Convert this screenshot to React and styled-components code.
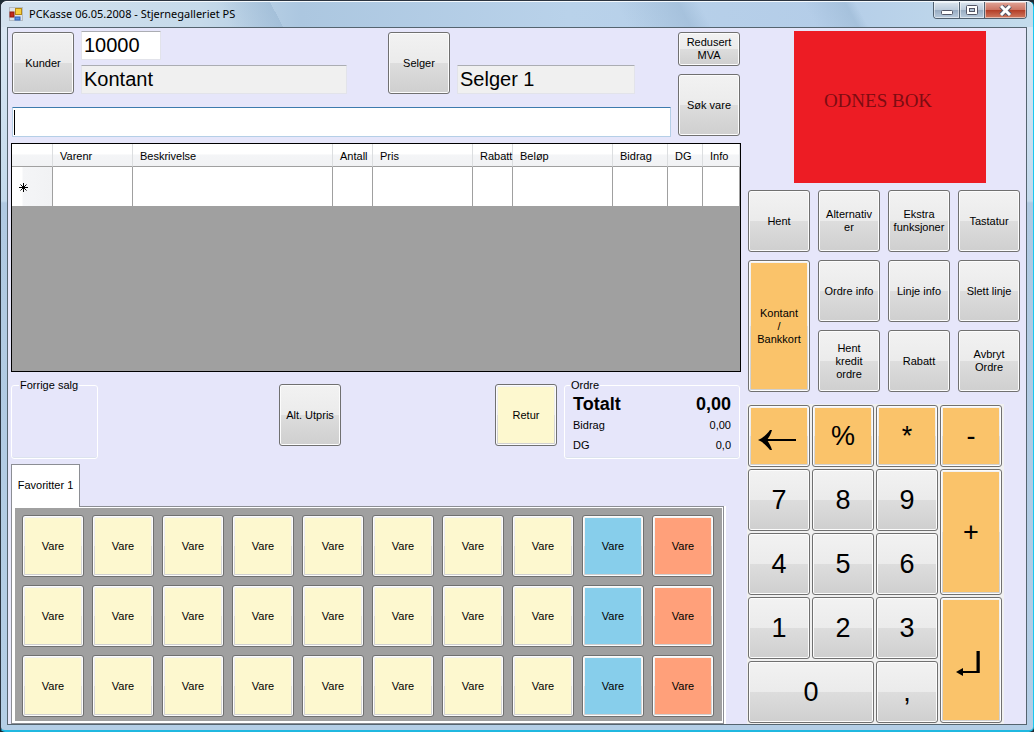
import React from 'react';
import styled, { createGlobalStyle, css } from 'styled-components';

const GlobalStyle = createGlobalStyle`
  * { box-sizing: border-box; }
  body {
    margin: 0;
    background: #1c2a33;
    font-family: "Liberation Sans", Arial, sans-serif;
    font-size: 11px;
    line-height: 13px;
    color: #000;
  }
  button, input { font-family: inherit; }
`;

const Window = styled.div`
  min-height: 100vh;
  display: flex;
  flex-direction: column;
  padding: 0 6px 5px;
  border: 1px solid #2b3440;
  border-right-color: #18c8f0;
  border-bottom: 2px solid #20b8e0;
  border-radius: 7px 7px 5px 5px;
  background: linear-gradient(180deg, #dce8f4 0, #c3d9ec 200px, #b0c9e2 202px, #b4cee6 100%);
`;

const TitleBar = styled.header`
  display: flex;
  align-items: flex-start;
  height: 26px;
  margin: 0 -6px;
  padding: 0 6px 0 8px;
  border-top: 1px solid #f4f9fd;
  border-radius: 6px 6px 0 0;
  background:
    linear-gradient(62deg, transparent 22%, rgba(150, 180, 208, 0.5) 27%, transparent 27%, transparent 60%, rgba(150, 180, 208, 0.5) 66%, transparent 68%, transparent 78%, rgba(150, 180, 208, 0.5) 82%, transparent 83%),
    linear-gradient(90deg, #d3e2ef 0, #c6daea 200px, #acc7e0 300px, #b9d2ea 55%, #b4cde8 80%, #c4dcec 100%);
`;

const TitleText = styled.h1`
  flex: 1;
  margin: 0;
  padding: 4px 0 0 5px;
  font-family: "Noto Sans", "Open Sans", sans-serif;
  font-size: 11px;
  font-weight: 400;
  line-height: 16px;
`;

const AppIcon = styled.svg`
  margin-top: 5px;
`;

const Controls = styled.div`
  display: flex;
  border: 1px solid #50606f;
  border-top: 0;
  border-radius: 0 0 4px 4px;
  overflow: hidden;
`;

const ControlButton = styled.button`
  display: flex;
  align-items: center;
  justify-content: center;
  width: ${({ $close }) => ($close ? '42px' : '25px')};
  height: 16px;
  padding: 0;
  border: 0;
  border-left: ${({ $first }) => ($first ? '0' : '1px solid #50606f')};
  box-shadow: inset 0 0 0 1px rgba(255, 255, 255, 0.5);
  background: ${({ $close }) =>
    $close
      ? 'linear-gradient(#e0a598, #cc7564 48%, #b33c25 50%, #d07a60)'
      : 'linear-gradient(#dbe5ee, #bccbdb 48%, #97abc1 50%, #b9cbdd)'};
`;

const Client = styled.main`
  flex: 1;
  display: flex;
  gap: 7px;
  padding: 3px 6px 0 3px;
  border: 1px solid #55646f;
  background: #e6e6fa;
`;

const LeftPane = styled.div`
  flex: 1;
  min-width: 0;
  display: flex;
  flex-direction: column;
`;

const RightPane = styled.aside`
  width: 272px;
`;

const greyFace = 'linear-gradient(#f2f2f2, #ebebeb 50%, #dddddd 50%, #cfcfcf)';

const Button = styled.button`
  width: 62px;
  height: ${({ $short }) => ($short ? '34px' : '62px')};
  flex: none;
  padding: 2px;
  border: 1px solid #707070;
  border-radius: 3px;
  box-shadow: inset 0 0 0 1px #fcfcfc;
  background: ${greyFace};
  color: #000;
  font-size: 11px;
  line-height: 13px;
  text-align: center;
  ${({ $face }) =>
    $face &&
    css`
      background: linear-gradient(${$face}, ${$face}) content-box, ${greyFace};
    `}
`;

const TopArea = styled.div`
  display: flex;
  align-items: flex-start;
  gap: 7px;
  padding: 1px 1px 0;
`;

const Entry = styled.div`
  flex: 1;
  min-width: 0;
  display: flex;
  flex-direction: column;
  gap: 13px;
`;

const EntryRow = styled.div`
  display: flex;
  align-items: flex-end;
  height: 62px;
`;

const Fields = styled.div`
  display: flex;
  flex-direction: column;
  gap: 5px;
  margin-left: 7px;
  margin-right: ${({ $gap }) => $gap || '0'};
`;

const TextField = styled.input`
  width: ${({ $width }) => $width};
  height: 29px;
  padding: 0 2px;
  border: 1px solid #e2e3ea;
  border-top-color: #abadb3;
  border-radius: 1px;
  outline: 0;
  background: ${({ readOnly }) => (readOnly ? '#f0f0f0' : '#fff')};
  font-size: 20px;
  line-height: 24px;
  color: #000;
`;

const SearchBox = styled.label`
  display: flex;
  align-items: center;
  height: 30px;
  padding: 1px;
  border: 1px solid #b5cfe7;
  border-top-color: #3d7bad;
  border-radius: 1px;
  background: #fff;
`;

const SearchInput = styled.input`
  flex: 1;
  height: 25px;
  padding: 0;
  border: 0;
  border-left: 1px solid #000;
  outline: 0;
  background: transparent;
  font-size: 20px;
`;

const SideButtons = styled.div`
  display: flex;
  flex-direction: column;
  gap: 8px;
`;

const GridFrame = styled.div`
  height: 229px;
  margin-top: 6px;
  border: 1px solid #000;
  background: #a0a0a0;
`;

const Grid = styled.table`
  width: 100%;
  table-layout: fixed;
  border-collapse: separate;
  border-spacing: 0;
`;

const HeadCell = styled.th`
  width: ${({ $width }) => $width || 'auto'};
  height: 23px;
  padding: 2px 0 0 7px;
  border-right: 1px solid #dcdee0;
  border-bottom: 1px solid #a0a0a0;
  background: linear-gradient(#fff 45%, #f4f5f7 50%, #f1f2f4);
  font-weight: 400;
  text-align: left;
  white-space: nowrap;
`;

const Cell = styled.td`
  height: 40px;
  padding: 0;
  border-right: 1px solid #a0a0a0;
  border-bottom: 1px solid #a0a0a0;
  background: #fff;
`;

const RowMark = styled(Cell)`
  padding: 4px 0 0 7px;
  background: linear-gradient(90deg, #fff 10px, #f4f5f7 11px, #f1f2f4);
`;

const Summary = styled.div`
  display: flex;
  align-items: flex-start;
  padding: 7px 1px 0 0;
`;

const Push = styled.div`
  display: flex;
  justify-content: flex-end;
  flex: ${({ $grow }) => $grow};
  padding: 5px 0 0;
`;

const Group = styled.fieldset`
  width: ${({ $width }) => $width};
  height: 80px;
  margin: 0;
  padding: 0 8px;
  border: 1px solid #fff;
  border-radius: 3px;
  box-shadow: inset 0 -1px 0 #dce3ee;
`;

const Legend = styled.legend`
  margin-left: ${({ $flush }) => ($flush ? '-3px' : '-1px')};
  padding: 0 1px;
`;

const Totals = styled.dl`
  margin: 0;
  padding-top: 1px;
`;

const TotalLine = styled.div`
  display: flex;
  justify-content: space-between;
  line-height: 20px;
  ${({ $main }) =>
    $main &&
    css`
      font-size: 18px;
      font-weight: 700;
      line-height: 22px;
    `}
  dt, dd { margin: 0; }
`;

const Favourites = styled.section`
  width: 713px;
  max-width: 100%;
  margin-top: 5px;
`;

const Tab = styled.button`
  display: block;
  height: 43px;
  width: 69px;
  padding: 0 0 2px;
  border: 1px solid #8c8e94;
  border-bottom: 0;
  position: relative;
  background: #fff;
  color: #000;
  font-size: 11px;
`;

const TabPanel = styled.div`
  margin-top: -1px;
  padding: 1px 1px 2px 3px;
  border: 1px solid #8c8e94;
  box-shadow: 2px 0 0 #fff;
  background: #fff;
`;

const Wares = styled.div`
  display: grid;
  grid-template-columns: repeat(10, 62px);
  gap: 8px;
  padding: 7px 7px 4px;
  background: #a0a0a0;
`;

const Logo = styled.div`
  display: flex;
  align-items: center;
  justify-content: center;
  width: 192px;
  height: 152px;
  margin-left: 46px;
  padding: 0 24px 14px 0;
  background: #ed1c24;
  color: #7d0c12;
  font-family: "Liberation Serif", serif;
  font-size: 19px;
`;

const Actions = styled.div`
  display: grid;
  grid-template-columns: repeat(4, 62px);
  grid-auto-rows: 62px;
  gap: 8px;
  margin-top: 7px;
`;

const ActionButton = styled(Button)`
  height: auto;
  grid-row: span ${({ $rows }) => $rows || 1};
`;

const Keypad = styled.div`
  display: grid;
  grid-template-columns: repeat(4, 62px);
  grid-auto-rows: 62px;
  gap: 2px;
  width: 257px;
  margin: 12px 0 0 -1px;
  padding: 1px;
  background: #f0f0f0;
`;

const Key = styled(ActionButton)`
  width: auto;
  grid-column: span ${({ $cols }) => $cols || 1};
  font-size: 27px;
  line-height: 32px;
`;

const BackIcon = styled.svg`
  display: block;
  margin: 8px 0 0 7px;
`;

const EnterIcon = styled.svg`
  display: block;
  margin: 8px auto 0 13px;
`;

const orange = '#fac36a';
const yellow = '#fdf8cf';
const blue = '#87ceeb';
const salmon = '#ffa07a';

const columns = [
  ['Varenr', '80px'],
  ['Beskrivelse'],
  ['Antall', '40px'],
  ['Pris', '100px'],
  ['Rabatt', '40px'],
  ['Beløp', '100px'],
  ['Bidrag', '55px'],
  ['DG', '35px'],
  ['Info', '37px'],
];

const actions = [
  { text: 'Hent' },
  { text: 'Alternativ\ner' },
  { text: 'Ekstra\nfunksjoner' },
  { text: 'Tastatur' },
  { text: 'Kontant\n/\nBankkort', face: orange, rows: 2 },
  { text: 'Ordre info' },
  { text: 'Linje info' },
  { text: 'Slett linje' },
  { text: 'Hent\nkredit\nordre' },
  { text: 'Rabatt' },
  { text: 'Avbryt\nOrdre' },
];

const BackArrow = () => (
  <BackIcon width="40" height="22" viewBox="0 0 40 22">
    <path d="M6 11H38" stroke="#000" strokeWidth="2" />
    <path d="M0 11C5 9 9 5 12 1H14C13 5 11 8 9 11C11 14 13 17 14 21H12C9 17 5 13 0 11Z" />
  </BackIcon>
);

const EnterArrow = () => (
  <EnterIcon width="26" height="26" viewBox="0 0 26 26">
    <path d="M6 21H22.500V0" fill="none" stroke="#000" strokeWidth="2" />
    <path d="M22 0V22" stroke="#000" strokeWidth="3" />
    <path d="M0 21L7 17V25Z" />
  </EnterIcon>
);

const keys = [
  { text: <BackArrow />, label: 'Tilbake', face: orange },
  { text: '%', face: orange },
  { text: '*', face: orange },
  { text: '-', face: orange },
  { text: '7' },
  { text: '8' },
  { text: '9' },
  { text: '+', face: orange, rows: 2 },
  { text: '4' },
  { text: '5' },
  { text: '6' },
  { text: '1' },
  { text: '2' },
  { text: '3' },
  { text: <EnterArrow />, label: 'Enter', face: orange, rows: 2 },
  { text: '0', cols: 2 },
  { text: ',' },
];

const wareFace = (index) => {
  const column = index % 10;
  if (column === 8) return blue;
  return column === 9 ? salmon : yellow;
};

const lines = (text) =>
  text.split('\n').map((line, i) => (
    <React.Fragment key={line}>
      {i > 0 && <br />}
      {line}
    </React.Fragment>
  ));

const App = () => (
  <>
    <GlobalStyle />
    <Window>
      <TitleBar>
        <AppIcon width="15" height="15" viewBox="0 0 15 15">
          <rect x="0.5" y="0.5" width="13" height="13" fill="#dfe3e6" stroke="#b4bcc4" />
          <rect x="1" y="5" width="4" height="5" fill="#c22a1a" stroke="#8e1a10" />
          <rect x="6.5" y="1.5" width="6" height="6" fill="#f7cf3e" stroke="#b58a14" />
          <rect x="6" y="10" width="5" height="3" fill="#5a90e4" stroke="#2f62b8" />
        </AppIcon>
        <TitleText>PCKasse 06.05.2008 - Stjernegalleriet PS</TitleText>
        <Controls>
          <ControlButton $first aria-label="Minimer">
            <svg width="12" height="12" viewBox="0 0 12 12">
              <rect x="0.5" y="6.5" width="11" height="4" rx="1" fill="#fff" stroke="#535666" />
            </svg>
          </ControlButton>
          <ControlButton aria-label="Maksimer">
            <svg width="12" height="10" viewBox="0 0 12 10">
              <rect x="0.5" y="0.5" width="11" height="9" rx="1" fill="#fff" stroke="#535666" />
              <rect x="3.5" y="3.5" width="5" height="3" fill="#b3c4d6" stroke="#535666" />
            </svg>
          </ControlButton>
          <ControlButton $close aria-label="Lukk">
            <svg width="13" height="11" viewBox="0 0 13 11">
              <path d="M2 1L11 10M11 1L2 10" stroke="#535666" strokeWidth="5" />
              <path d="M2 1L11 10M11 1L2 10" stroke="#fff" strokeWidth="3" />
            </svg>
          </ControlButton>
        </Controls>
      </TitleBar>
      <Client>
        <LeftPane>
          <TopArea>
            <Entry>
              <EntryRow>
                <Button>Kunder</Button>
                <Fields $gap="41px">
                  <TextField $width="80px" defaultValue="10000" aria-label="Kundenummer" />
                  <TextField $width="266px" defaultValue="Kontant" readOnly aria-label="Kunde" />
                </Fields>
                <Button>Selger</Button>
                <Fields>
                  <TextField $width="178px" defaultValue="Selger 1" readOnly aria-label="Selger" />
                </Fields>
              </EntryRow>
              <SearchBox>
                <SearchInput aria-label="Vare" />
              </SearchBox>
            </Entry>
            <SideButtons>
              <Button $short>Redusert MVA</Button>
              <Button>Søk vare</Button>
            </SideButtons>
          </TopArea>
          <GridFrame>
            <Grid>
              <thead>
                <tr>
                  <HeadCell $width="41px" />
                  {columns.map(([name, width]) => (
                    <HeadCell key={name} $width={width}>{name}</HeadCell>
                  ))}
                </tr>
              </thead>
              <tbody>
                <tr>
                  <RowMark>
                    <svg width="9" height="9" viewBox="0 0 9 9">
                      <path d="M4.500 0V9M0 4.500H9M1.500 1.500L7.500 7.500M7.500 1.500L1.500 7.500" stroke="#000" />
                    </svg>
                  </RowMark>
                  {columns.map(([name]) => (
                    <Cell key={name} />
                  ))}
                </tr>
              </tbody>
            </Grid>
          </GridFrame>
          <Summary>
            <Group $width="87px">
              <Legend>Forrige salg</Legend>
            </Group>
            <Push $grow="243">
              <Button>Alt. Utpris</Button>
            </Push>
            <Push $grow="216">
              <Button $face={yellow}>Retur</Button>
            </Push>
            <Push $grow="0 0 7px" />
            <Group $width="176px">
              <Legend $flush>Ordre</Legend>
              <Totals>
                <TotalLine $main><dt>Totalt</dt><dd>0,00</dd></TotalLine>
                <TotalLine><dt>Bidrag</dt><dd>0,00</dd></TotalLine>
                <TotalLine><dt>DG</dt><dd>0,0</dd></TotalLine>
              </Totals>
            </Group>
          </Summary>
          <Favourites>
            <Tab>Favoritter 1</Tab>
            <TabPanel>
              <Wares>
                {Array.from({ length: 30 }, (_, i) => (
                  <Button key={i} $face={wareFace(i)}>Vare</Button>
                ))}
              </Wares>
            </TabPanel>
          </Favourites>
        </LeftPane>
        <RightPane>
          <Logo>ODNES BOK</Logo>
          <Actions>
            {actions.map(({ text, face, rows }) => (
              <ActionButton key={text} $face={face} $rows={rows}>{lines(text)}</ActionButton>
            ))}
          </Actions>
          <Keypad>
            {keys.map(({ text, label, face, rows, cols }, i) => (
              <Key key={i} aria-label={label} $face={face} $rows={rows} $cols={cols}>{text}</Key>
            ))}
          </Keypad>
        </RightPane>
      </Client>
    </Window>
  </>
);

export default App;
